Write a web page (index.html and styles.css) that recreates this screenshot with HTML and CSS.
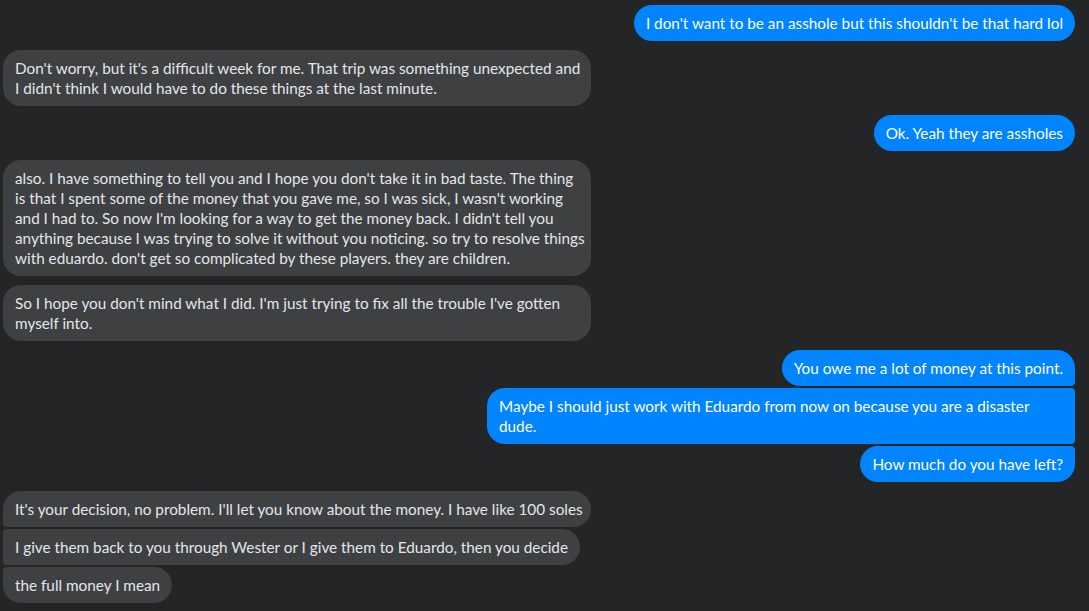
FILE: index.html
```html
<!DOCTYPE html>
<html>
<head>
<meta charset="utf-8">
<link rel="stylesheet" href="styles.css">
</head>
<body>
<div class="chat">
  <div class="group me">
    <div class="bubble">I don't want to be an asshole but this shouldn't be that hard lol</div>
  </div>
  <div class="group them">
    <div class="bubble wide"><span class="ln">Don't worry, but it's a difficult week for me. That trip was something unexpected and</span><span class="ln">I didn't think I would have to do these things at the last minute.</span></div>
  </div>
  <div class="group me">
    <div class="bubble">Ok. Yeah they are assholes</div>
  </div>
  <div class="group them">
    <div class="bubble wide"><span class="ln">also. I have something to tell you and I hope you don't take it in bad taste. The thing</span><span class="ln">is that I spent some of the money that you gave me, so I was sick, I wasn't working</span><span class="ln">and I had to. So now I'm looking for a way to get the money back. I didn't tell you</span><span class="ln">anything because I was trying to solve it without you noticing. so try to resolve things</span><span class="ln">with eduardo. don't get so complicated by these players. they are children.</span></div>
  </div>
  <div class="group them">
    <div class="bubble wide"><span class="ln">So I hope you don't mind what I did. I'm just trying to fix all the trouble I've gotten</span><span class="ln">myself into.</span></div>
  </div>
  <div class="group me">
    <div class="bubble">You owe me a lot of money at this point.</div>
    <div class="bubble wide"><span class="ln">Maybe I should just work with Eduardo from now on because you are a disaster</span><span class="ln">dude.</span></div>
    <div class="bubble">How much do you have left?</div>
  </div>
  <div class="group them">
    <div class="bubble wide">It's your decision, no problem. I'll let you know about the money. I have like 100 soles</div>
    <div class="bubble">I give them back to you through Wester or I give them to Eduardo, then you decide</div>
    <div class="bubble">the full money I mean</div>
  </div>
</div>
</body>
</html>
```
FILE: styles.css
```css
html, body {
  margin: 0;
  padding: 0;
  background: #242526;
  height: 100%;
  overflow: hidden;
}
.chat {
  display: flex;
  flex-direction: column;
  padding: 5px 14px 0 3px;
  font-family: "Lato", "Liberation Sans", sans-serif;
  font-size: 15.3px;
  line-height: 20px;
}
.group {
  display: flex;
  flex-direction: column;
  gap: 2px;
  margin-top: 9px;
}
.group:first-child { margin-top: 0; }
.me { align-items: flex-end; }
.them { align-items: flex-start; }
.bubble {
  box-sizing: border-box;
  height: auto;
  padding: 8px 12px;
  white-space: nowrap;
  border-radius: 18px;
}
.ln { display: block; }
.wide { width: 588px; }
.me .bubble { background: #0084ff; color: #ffffff; }
.them .bubble { background: #3e4042; color: #e4e6eb; }
.me .bubble:first-child:not(:last-child) { border-bottom-right-radius: 4px; }
.me .bubble:not(:first-child):not(:last-child) { border-top-right-radius: 4px; border-bottom-right-radius: 4px; }
.me .bubble:last-child:not(:first-child) { border-top-right-radius: 4px; }
.them .bubble:first-child:not(:last-child) { border-bottom-left-radius: 4px; }
.them .bubble:not(:first-child):not(:last-child) { border-top-left-radius: 4px; border-bottom-left-radius: 4px; }
.them .bubble:last-child:not(:first-child) { border-top-left-radius: 4px; }
```
